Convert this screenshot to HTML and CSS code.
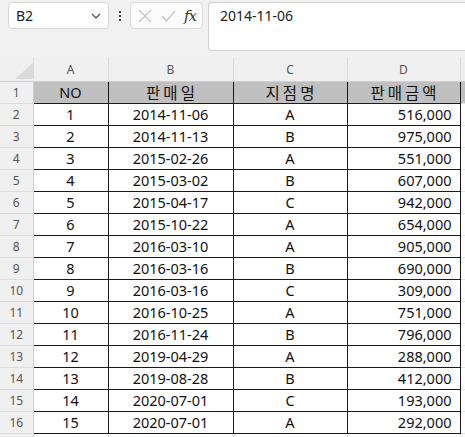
FILE: index.html
```html
<!DOCTYPE html>
<html>
<head>
<meta charset="utf-8">
<link rel="stylesheet" href="styles.css">
</head>
<body>
<div class="topbar">
  <div class="namebox">
    <span class="ref">B2</span>
    <svg class="chev" width="10" height="6" viewBox="0 0 10 6"><path d="M1 1 L5 5 L9 1" fill="none" stroke="#444" stroke-width="1.1"/></svg>
  </div>
  <div class="dots"><i></i><i></i><i></i></div>
  <div class="fxbox">
    <svg width="14" height="14" viewBox="0 0 14 14"><path d="M1 1 L13 13 M13 1 L1 13" stroke="#c4c4c4" stroke-width="1.2" fill="none"/></svg>
    <svg width="15" height="14" viewBox="0 0 15 14"><path d="M1 7 L5.5 12 L14 2" stroke="#c4c4c4" stroke-width="1.2" fill="none"/></svg>
    <span class="fx">fx</span>
  </div>
  <div class="formula">2014-11-06</div>
</div>
<table class="sheet">
  <colgroup>
    <col class="c-rh"><col class="c-a"><col class="c-b"><col class="c-c"><col class="c-d"><col class="c-e">
  </colgroup>
  <thead>
    <tr class="colhead">
      <th class="corner"><svg width="22" height="16" viewBox="0 0 22 16"><path d="M22 0 L22 16 L4 16 Z" fill="#dadada"/></svg></th>
      <th>A</th><th>B</th><th>C</th><th>D</th><th class="ext"></th>
    </tr>
  </thead>
  <tbody>
    <tr class="hdr"><th>1</th><td class="c">NO</td><td class="c kr">판매일</td><td class="c kr">지점명</td><td class="c kr">판매금액</td><td class="ext"></td></tr>
    <tr><th>2</th><td class="c">1</td><td class="c">2014-11-06</td><td class="c">A</td><td class="r">516,000</td><td class="ext"></td></tr>
    <tr><th>3</th><td class="c">2</td><td class="c">2014-11-13</td><td class="c">B</td><td class="r">975,000</td><td class="ext"></td></tr>
    <tr><th>4</th><td class="c">3</td><td class="c">2015-02-26</td><td class="c">A</td><td class="r">551,000</td><td class="ext"></td></tr>
    <tr><th>5</th><td class="c">4</td><td class="c">2015-03-02</td><td class="c">B</td><td class="r">607,000</td><td class="ext"></td></tr>
    <tr><th>6</th><td class="c">5</td><td class="c">2015-04-17</td><td class="c">C</td><td class="r">942,000</td><td class="ext"></td></tr>
    <tr><th>7</th><td class="c">6</td><td class="c">2015-10-22</td><td class="c">A</td><td class="r">654,000</td><td class="ext"></td></tr>
    <tr><th>8</th><td class="c">7</td><td class="c">2016-03-10</td><td class="c">A</td><td class="r">905,000</td><td class="ext"></td></tr>
    <tr><th>9</th><td class="c">8</td><td class="c">2016-03-16</td><td class="c">B</td><td class="r">690,000</td><td class="ext"></td></tr>
    <tr><th>10</th><td class="c">9</td><td class="c">2016-03-16</td><td class="c">C</td><td class="r">309,000</td><td class="ext"></td></tr>
    <tr><th>11</th><td class="c">10</td><td class="c">2016-10-25</td><td class="c">A</td><td class="r">751,000</td><td class="ext"></td></tr>
    <tr><th>12</th><td class="c">11</td><td class="c">2016-11-24</td><td class="c">B</td><td class="r">796,000</td><td class="ext"></td></tr>
    <tr><th>13</th><td class="c">12</td><td class="c">2019-04-29</td><td class="c">A</td><td class="r">288,000</td><td class="ext"></td></tr>
    <tr><th>14</th><td class="c">13</td><td class="c">2019-08-28</td><td class="c">B</td><td class="r">412,000</td><td class="ext"></td></tr>
    <tr><th>15</th><td class="c">14</td><td class="c">2020-07-01</td><td class="c">C</td><td class="r">193,000</td><td class="ext"></td></tr>
    <tr><th>16</th><td class="c">15</td><td class="c">2020-07-01</td><td class="c">A</td><td class="r">292,000</td><td class="ext"></td></tr>
    <tr class="blank"><th></th><td></td><td></td><td></td><td></td><td class="ext"></td></tr>
  </tbody>
</table>
</body>
</html>
```
FILE: styles.css
```css
html, body {
  margin: 0;
  padding: 0;
  width: 465px;
  height: 437px;
  overflow: hidden;
  background: #f1f1f1;
  font-family: "Noto Sans", "Noto Sans CJK KR", sans-serif;
}

.topbar {
  display: flex;
  align-items: flex-start;
  padding: 2px 0 0 8px;
  height: 56px;
  box-sizing: border-box;
}

.namebox {
  width: 101px;
  height: 27px;
  box-sizing: border-box;
  background: #fff;
  border: 1px solid #d6d6d6;
  border-radius: 4px;
  display: flex;
  align-items: center;
  justify-content: space-between;
  padding: 0 7px 1px 7px;
  font-size: 14px;
  color: #222;
}

.namebox .chev { margin-top: 1px; }

.dots {
  width: 21px;
  height: 27px;
  display: flex;
  flex-direction: column;
  align-items: center;
  justify-content: center;
  gap: 2px;
}

.dots i {
  display: block;
  width: 2px;
  height: 2px;
  background: #444;
}

.fxbox {
  width: 73px;
  height: 27px;
  box-sizing: border-box;
  background: #fbfbfb;
  border: 1px solid #dcdcdc;
  border-radius: 4px;
  display: flex;
  align-items: center;
  padding: 0 0 0 7px;
  gap: 9px;
}

.fxbox .fx {
  font-family: "DejaVu Serif", "Liberation Serif", serif;
  font-style: italic;
  font-size: 15px;
  color: #333;
  margin-left: -1px;
  letter-spacing: -1px;
}

.formula {
  margin-left: 5px;
  flex: 1;
  height: 49px;
  box-sizing: border-box;
  background: #fff;
  border: 1px solid #cfcfcf;
  border-right: none;
  border-radius: 4px 0 0 4px;
  padding: 3px 0 0 11px;
  font-size: 14px;
  color: #222;
}

.sheet {
  border-collapse: collapse;
  table-layout: fixed;
  width: 470px;
  margin-top: 2px;
}

.c-rh { width: 33px; }
.c-a { width: 75px; }
.c-b { width: 125px; }
.c-c { width: 114px; }
.c-d { width: 113px; }
.c-e { width: 10px; }

.colhead th {
  height: 21px;
  padding: 0;
  background: #f0f0f0;
  font-weight: normal;
  font-size: 12px;
  color: #555;
  border-right: 1px solid #dcdcdc;
  border-bottom: 1px solid #cfcfcf;
  vertical-align: middle;
}

.colhead th.corner {
  text-align: right;
  vertical-align: bottom;
  padding: 0 0 2px 0;
  line-height: 0;
}

tbody th {
  height: 21px;
  padding: 0;
  background: #f0f0f0;
  font-weight: normal;
  font-size: 12px;
  color: #555;
  text-align: center;
  border-bottom: 1px solid #dcdcdc;
  border-right: 1px solid #cfcfcf;
}

tbody td {
  height: 21px;
  padding: 0;
  background: #fff;
  border: 1px solid #1a1a1a;
  font-size: 14.5px;
  color: #111;
  line-height: 21px;
  white-space: nowrap;
  overflow: hidden;
}

tbody td.c { text-align: center; }
tbody td.r { text-align: right; padding-right: 8px; }

tbody tr.hdr td {
  background: #c0c0c0;
  font-size: 14.5px;
}

tbody tr.hdr td.kr {
  font-family: "Noto Sans CJK KR", sans-serif;
  font-size: 15.5px;
  letter-spacing: 3px;
  text-indent: 3px;
}

tbody td.ext {
  border: none;
  border-left: 1px solid #1a1a1a;
  border-bottom: 1px solid #e1e1e1;
  background: #fff;
}

tbody tr.blank td {
  border: none;
  border-right: 1px solid #e1e1e1;
  border-top: 1px solid #1a1a1a;
}

tbody tr.blank td.ext { border-top: none; }
```
